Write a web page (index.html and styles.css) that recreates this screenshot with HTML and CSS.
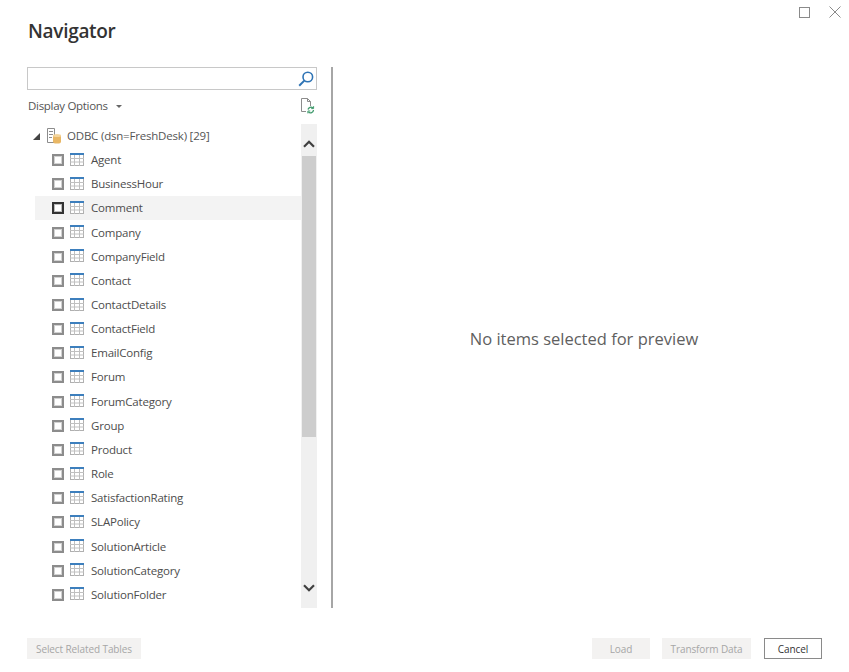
FILE: index.html
```html
<!DOCTYPE html>
<html lang="en">
<head>
<meta charset="utf-8">
<title>Navigator</title>
<link rel="stylesheet" href="styles.css">
</head>
<body>
<svg class="defs" width="0" height="0" aria-hidden="true">
  <symbol id="tbl" viewBox="0 0 14 13">
    <rect x="0.5" y="0.5" width="13" height="12" fill="#fff" stroke="#b0b0b0"/>
    <rect x="0" y="0" width="14" height="2" fill="#3d7fbd"/>
    <path d="M0 5.5H14M0 9H14M4.5 2V13M9.5 2V13" stroke="#c0c0c0" fill="none"/>
  </symbol>
</svg>
<div class="dialog">
  <header class="head">
    <h1 class="title">Navigator</h1>
    <div class="winctl">
      <svg class="ctl" width="11" height="11" viewBox="0 0 11 11"><rect x="0.5" y="0.5" width="10" height="10" fill="none" stroke="#8a8a8a"/></svg>
      <svg class="ctl" width="12" height="12" viewBox="0 0 12 12"><path d="M0.5 0.5L11.5 11.5M11.5 0.5L0.5 11.5" fill="none" stroke="#8a8a8a"/></svg>
    </div>
  </header>
  <main class="main">
    <section class="left">
      <div class="search">
        <svg width="16" height="16" viewBox="0 0 16 16"><circle cx="9.8" cy="6" r="4.8" fill="none" stroke="#2f74b5" stroke-width="1.6"/><path d="M6.3 9.6L1.2 14.8" stroke="#2f74b5" stroke-width="2" fill="none"/></svg>
      </div>
      <div class="opts">
        <span class="optlabel">Display Options</span>
        <span class="caret"></span>
        <svg class="refresh" width="15" height="16" viewBox="0 0 15 16"><path d="M1.5 0.5H7.5L10.5 3.5V8M7.5 0.5V3.5H10.5M1.5 0.5V13.5H6" fill="none" stroke="#8c8c8c"/><path d="M8 11.5A3 3 0 0 1 13 10M13.5 12A3 3 0 0 1 8.5 14" fill="none" stroke="#3f9a6c" stroke-width="1.3"/><path d="M13.6 8.2V10.6H11.2M7.9 15.4V13H10.3" fill="none" stroke="#3f9a6c"/></svg>
      </div>
      <div class="treewrap">
        <div class="tree">
          <div class="root">
            <span class="tri"></span>
            <svg class="dbicon" width="15" height="16" viewBox="0 0 15 16"><path d="M0.5 0.5H7.5V14.5H0.5Z" fill="#fff" stroke="#8c8c8c"/><path d="M2 3.5H6M2 6.5H6M2 9.5H5" stroke="#8c8c8c" fill="none"/><rect x="6" y="7" width="8" height="8.5" rx="2" fill="#e9b765"/><ellipse cx="10" cy="7.5" rx="4" ry="1.5" fill="#f3d49b"/></svg>
            <span class="rootlabel">ODBC (dsn=FreshDesk) [29]</span>
          </div>
          <div class="row"><span class="cb"></span><svg class="ti"><use href="#tbl"/></svg><span class="name">Agent</span></div>
          <div class="row"><span class="cb"></span><svg class="ti"><use href="#tbl"/></svg><span class="name">BusinessHour</span></div>
          <div class="row hover"><span class="cb focus"></span><svg class="ti"><use href="#tbl"/></svg><span class="name">Comment</span></div>
          <div class="row"><span class="cb"></span><svg class="ti"><use href="#tbl"/></svg><span class="name">Company</span></div>
          <div class="row"><span class="cb"></span><svg class="ti"><use href="#tbl"/></svg><span class="name">CompanyField</span></div>
          <div class="row"><span class="cb"></span><svg class="ti"><use href="#tbl"/></svg><span class="name">Contact</span></div>
          <div class="row"><span class="cb"></span><svg class="ti"><use href="#tbl"/></svg><span class="name">ContactDetails</span></div>
          <div class="row"><span class="cb"></span><svg class="ti"><use href="#tbl"/></svg><span class="name">ContactField</span></div>
          <div class="row"><span class="cb"></span><svg class="ti"><use href="#tbl"/></svg><span class="name">EmailConfig</span></div>
          <div class="row"><span class="cb"></span><svg class="ti"><use href="#tbl"/></svg><span class="name">Forum</span></div>
          <div class="row"><span class="cb"></span><svg class="ti"><use href="#tbl"/></svg><span class="name">ForumCategory</span></div>
          <div class="row"><span class="cb"></span><svg class="ti"><use href="#tbl"/></svg><span class="name">Group</span></div>
          <div class="row"><span class="cb"></span><svg class="ti"><use href="#tbl"/></svg><span class="name">Product</span></div>
          <div class="row"><span class="cb"></span><svg class="ti"><use href="#tbl"/></svg><span class="name">Role</span></div>
          <div class="row"><span class="cb"></span><svg class="ti"><use href="#tbl"/></svg><span class="name">SatisfactionRating</span></div>
          <div class="row"><span class="cb"></span><svg class="ti"><use href="#tbl"/></svg><span class="name">SLAPolicy</span></div>
          <div class="row"><span class="cb"></span><svg class="ti"><use href="#tbl"/></svg><span class="name">SolutionArticle</span></div>
          <div class="row"><span class="cb"></span><svg class="ti"><use href="#tbl"/></svg><span class="name">SolutionCategory</span></div>
          <div class="row"><span class="cb"></span><svg class="ti"><use href="#tbl"/></svg><span class="name">SolutionFolder</span></div>
        </div>
        <div class="scroll">
          <div class="arrow"><svg width="12" height="8" viewBox="0 0 12 8"><path d="M1 6.8L6 1.8L11 6.8" fill="none" stroke="#404040" stroke-width="2.2"/></svg></div>
          <div class="thumb"></div>
          <div class="track"></div>
          <div class="arrow down"><svg width="12" height="8" viewBox="0 0 12 8"><path d="M1 1.2L6 6.2L11 1.2" fill="none" stroke="#404040" stroke-width="2.2"/></svg></div>
        </div>
      </div>
    </section>
    <div class="divider"></div>
    <section class="preview"><p>No items selected for preview</p></section>
  </main>
  <footer class="foot">
    <button class="btn dis related">Select Related Tables</button>
    <div class="spacer"></div>
    <button class="btn dis load">Load</button>
    <button class="btn dis transform">Transform Data</button>
    <button class="btn cancel">Cancel</button>
  </footer>
</div>
</body>
</html>
```
FILE: styles.css
```css
* { box-sizing: border-box; }
html, body { margin: 0; padding: 0; background: #fff; }
body { width: 849px; height: 672px; overflow: hidden; font-family: "Open Sans", "Noto Sans", "Liberation Sans", sans-serif; color: #4d4d4d; }
.defs { display: block; height: 0; }
.dialog { display: flex; flex-direction: column; height: 672px; }

.head { display: flex; justify-content: space-between; height: 67px; padding: 7px 8px 0 28px; }
.title { margin: 13px 0 0; font-size: 19px; line-height: 22px; font-weight: 600; color: #333; letter-spacing: -0.3px; }
.winctl { display: flex; gap: 19px; align-items: flex-start; }
.ctl { display: block; }
.winctl .ctl:last-child { margin-top: -1px; }

.main { display: flex; height: 541px; padding-left: 27px; }
.left { width: 290px; display: flex; flex-direction: column; }
.search { height: 23px; border: 1px solid #c8c8c8; display: flex; justify-content: flex-end; align-items: center; padding-right: 2px; }
.opts { display: flex; align-items: center; height: 34px; padding-bottom: 2px; padding-left: 1px; }
.optlabel { font-size: 11.5px; letter-spacing: -0.3px; color: #555; margin-bottom: 2px; }
.caret { margin-left: 8px; width: 0; height: 0; border-left: 3.5px solid transparent; border-right: 3.5px solid transparent; border-top: 3.5px solid #666; }
.refresh { margin-left: auto; margin-right: 2px; }

.treewrap { display: flex; height: 484px; }
.tree { width: 274px; padding-left: 8px; font-size: 11.5px; letter-spacing: -0.2px; overflow: hidden; }
.root { display: flex; align-items: center; height: 24px; color: #555; }
.tri { width: 0; height: 0; margin-left: -2px; border-style: solid; border-width: 0 0 7px 7px; border-color: transparent transparent #444 transparent; }
.dbicon { margin-left: 7px; }
.rootlabel { margin-left: 5px; margin-bottom: 2px; }
.row { display: flex; align-items: center; height: 24.17px; padding-left: 17px; }
.row.hover { background: #f3f3f3; }
.name { margin-bottom: 1px; }
.cb { width: 12px; height: 12px; border: 2px solid #8c8c8c; box-shadow: inset 0 0 0 1px #d2d2d2; background: #fff; flex: none; }
.cb.focus { border-color: #333; box-shadow: inset 0 0 0 1px #bbb; }
.ti { width: 14px; height: 13px; margin-left: 6px; margin-right: 7px; margin-top: -2px; flex: none; }

.scroll { width: 16px; display: flex; flex-direction: column; background: #f0f0f0; }
.arrow { height: 32px; display: flex; justify-content: center; align-items: center; padding-top: 8px; }
.arrow.down { height: 40px; padding-top: 0; }
.thumb { height: 281px; margin: 0 1px; background: #cdcdcd; }
.track { flex: 1; }

.divider { width: 2px; margin-left: 14px; background: #a6a6a6; }
.preview { flex: 1; display: flex; align-items: center; justify-content: center; padding: 1px 14px 0 0; }
.preview p { margin: 0; font-size: 16.5px; color: #606060; }

.foot { display: flex; padding: 30px 27px 0; }
.spacer { flex: 1; }
.btn { height: 21px; padding: 0; font: 10px "Open Sans", "Noto Sans", sans-serif; letter-spacing: -0.1px; border: 0; }
.dis { background: #f3f2f1; color: #a6a6a6; }
.related { width: 114px; }
.load { width: 58px; }
.transform { width: 89px; margin-left: 12px; }
.cancel { width: 58px; margin-left: 13px; background: #fff; border: 1px solid #8a8a8a; color: #333; }
```
